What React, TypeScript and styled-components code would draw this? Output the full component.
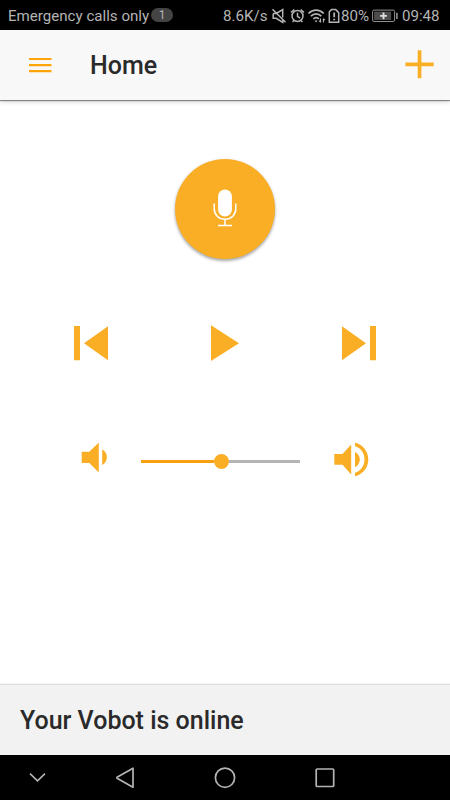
import React from 'react';
import styled, { createGlobalStyle } from 'styled-components';

const amber = '#f9ae26';
const statusGrey = '#b4b4b4';

const GlobalStyle = createGlobalStyle`
  * { box-sizing: border-box; }
  body { margin: 0; background: #fff; font-family: Roboto, sans-serif; }
  svg { display: block; flex: none; }
`;

const Screen = styled.div`
  width: 450px;
  height: 800px;
  display: flex;
  flex-direction: column;
  overflow: hidden;
  background: #fff;
`;

const StatusBar = styled.div`
  height: 30px;
  flex: none;
  display: flex;
  align-items: center;
  padding: 1px 8px 0 8px;
  background: #000;
  color: ${statusGrey};
  font-size: 15.1px;
  white-space: nowrap;
`;

const StatusText = styled.span<{ $width: number; $gap?: number }>`
  flex: none;
  width: ${(p) => p.$width}px;
  margin-left: ${(p) => p.$gap ?? 0}px;
  line-height: 20px;
`;

const CountBadge = styled.span`
  flex: none;
  width: 22px;
  height: 14px;
  margin: 0 50px 1px 2px;
  border-radius: 7px;
  background: #444;
  font-size: 12px;
  line-height: 14px;
  text-align: center;
`;

const Header = styled.header`
  height: 70px;
  flex: none;
  display: flex;
  align-items: center;
  padding: 0 16px 1px 28px;
  background: #f8f8f8;
  box-shadow: 0 1px 1px rgba(0, 0, 0, 0.42), 0 2px 5px rgba(0, 0, 0, 0.16);
`;

const Title = styled.h1`
  flex: 1;
  margin: 3px 0 0 38px;
  font-size: 25px;
  line-height: 30px;
  font-weight: 500;
  color: #2a2a2a;
`;

const IconButton = styled.button`
  padding: 0;
  border: 0;
  background: none;
`;

const Main = styled.main`
  flex: 1;
  display: flex;
  flex-direction: column;
  align-items: center;
  padding-top: 59px;
`;

const MicButton = styled.button`
  width: 100px;
  height: 100px;
  padding: 0 0 2px;
  border: 0;
  border-radius: 50%;
  display: flex;
  align-items: center;
  justify-content: center;
  background: ${amber};
  box-shadow: 0 2px 3px rgba(0, 0, 0, 0.3), 0 1px 4px rgba(0, 0, 0, 0.08);
`;

const Transport = styled.div`
  width: 302px;
  height: 36px;
  margin-top: 66px;
  display: flex;
  align-items: center;
  justify-content: space-between;
`;

const VolumeRow = styled.div`
  width: 288px;
  height: 36px;
  margin-top: 81px;
  display: flex;
  align-items: flex-start;
`;

const Slider = styled.div`
  width: 159px;
  height: 15px;
  margin: 12px 34px 0;
  display: flex;
  align-items: center;
`;

const Track = styled.div<{ $color: string; $flex: number }>`
  flex: ${(p) => p.$flex};
  height: 2.5px;
  background: ${(p) => p.$color};
`;

const Thumb = styled.div`
  width: 15px;
  height: 15px;
  border-radius: 50%;
  background: ${amber};
`;

const Footer = styled.footer`
  height: 71px;
  flex: none;
  display: flex;
  align-items: center;
  padding: 0 20px;
  background: #f2f2f2;
  border-top: 1px solid #dedede;
  box-shadow: 0 -1px 1px rgba(0, 0, 0, 0.04);
  color: #2a2a2a;
  font-size: 25px;
  font-weight: 500;
`;

const NavBar = styled.nav`
  height: 45px;
  flex: none;
  display: flex;
  align-items: center;
  padding-left: 28px;
  background: #000;
`;

const NavSlot = styled.div<{ $gap: number }>`
  margin-right: ${(p) => p.$gap}px;
`;

const StatusIcons = () => (
  <svg width="70" height="16" viewBox="0 0 70 16" fill="none" stroke={statusGrey} strokeWidth="1.5">
    <path d="M3.2 5.5h3l6.500-4v8M3.200 5.500v4.800h3l6.500 4V12M2.500 1.300l13 13" />
    <circle cx="27.500" cy="8" r="5.500" />
    <path d="M27.500 4.800v3.600l2.600 1.700M21 4.300l3.400-2.800M34 4.300l-3.400-2.800M23.800 12.500l-1.200 1.500M31.200 12.500l1.200 1.500" />
    <path d="M38.500 5.500c4.200-4.400 11-4.400 15.200 0M40.900 8.200c3-3 7.400-3 10.400 0M43.300 10.800c1.700-1.500 3.900-1.500 5.600 0" strokeWidth="1.800" />
    <path d="M44.500 12.600h3l-1.500 1.800z" fill={statusGrey} stroke="none" />
    <path d="M50.500 10.500v4M53.400 10.500v4M49.200 12.700l1.300 1.500M54.700 12.200l-1.300-1.500" strokeWidth="1.100" />
    <path d="M61.500 1.600h4.200l3 3v9.700h-9.400V3.800z" />
    <path d="M64.200 4.600v4.600M64.200 10.700v1.600" strokeWidth="1.800" />
  </svg>
);

const BatteryIcon = () => (
  <svg width="27" height="14" viewBox="0 0 27 14">
    <rect x="0.600" y="1.100" width="22" height="11.400" rx="1.500" fill="none" stroke="#929292" />
    <rect x="2.100" y="2.600" width="17" height="8.400" fill="#4c4c4c" />
    <path d="M11.500 3.500v6.800M8.100 6.900h6.800" stroke="#ddd" strokeWidth="1.900" />
    <path d="M24.900 3.700v6.200" stroke="#929292" strokeWidth="1.600" />
  </svg>
);

const MenuIcon = () => (
  <svg width="24" height="16" viewBox="0 0 24 16" fill="#ffa50a">
    <path d="M1 .900h22.500v2.200H1zM1 7h22.500v2.200H1zM1 13.100h22.500v2.200H1z" />
  </svg>
);

const PlusIcon = () => (
  <svg width="29" height="29" viewBox="0 0 29 29" fill={amber}>
    <path d="M12.700.300h3.700v12.200h12.300v3.700H16.400v12.100h-3.700V16.200H.400v-3.700h12.300z" />
  </svg>
);

const MicIcon = () => (
  <svg width="24" height="38" viewBox="0 0 24 38">
    <rect x="5.100" y="0.600" width="13.800" height="27" rx="6.900" fill="#fff" />
    <path d="M1.200 14.400v5.100c0 6.200 4.400 10.800 10.800 10.800s10.800-4.600 10.800-10.800v-5.100M12 30.300V36.500M5 36.500h14" fill="none" stroke="#fff" strokeWidth="1.500" />
  </svg>
);

const SkipIcon = ({ next = false }: { next?: boolean }) => (
  <svg width="34" height="36" viewBox="0 0 34 36" fill={amber}>
    <path d={next ? 'M0 1.300l24 17L0 35.300zM28 1h6v34.300h-6z' : 'M34 1.300L10 18.300l24 17zM0 1h6v34.300H0z'} />
  </svg>
);

const PlayIcon = () => (
  <svg width="28" height="36" viewBox="0 0 28 36" fill={amber}>
    <path d="M0 .300l28 17.900L0 36z" />
  </svg>
);

const VolumeLowIcon = () => (
  <svg width="26" height="32" viewBox="0 0 26 32" fill={amber}>
    <path d="M.700 9.700h7.600L17.800.400v30l-9.500-9.500H.700zM21.200 7.500c2.700 1.100 4.700 4.100 4.700 7.700s-2 6.600-4.700 7.800z" />
  </svg>
);

const VolumeHighIcon = () => (
  <svg width="35" height="36" viewBox="0 0 35 36" fill={amber}>
    <path d="M.300 12.100h8.200L17.200 2.500v30l-8.700-9.700H.300zM21 9.900c2.700 1.100 4.800 4.100 4.800 7.500s-2.100 6.500-4.800 7.700zM21 .800c7.600 1.500 13.300 8.500 13.300 16.600S28.600 32.500 21 34.200v-3.500c5.500-1.500 9.500-7 9.500-13.300S26.500 5.700 21 4.300z" />
  </svg>
);

const ChevronIcon = () => (
  <svg width="18" height="12" viewBox="0 0 18 12" fill="none" stroke={statusGrey} strokeWidth="1.600">
    <path d="M2 1.700l7.500 7.100L17 1.700" />
  </svg>
);

const BackIcon = () => (
  <svg width="20" height="22" viewBox="0 0 20 22" fill="none" stroke={statusGrey} strokeWidth="1.700" strokeLinejoin="round">
    <path d="M18 1.200v19L2 11.200v-1z" />
  </svg>
);

const HomeIcon = () => (
  <svg width="22" height="22" viewBox="0 0 22 22" fill="none" stroke={statusGrey} strokeWidth="1.700">
    <circle cx="11" cy="10.700" r="9.600" />
  </svg>
);

const RecentIcon = () => (
  <svg width="20" height="20" viewBox="0 0 20 20" fill="none" stroke={statusGrey} strokeWidth="1.700">
    <rect x="1.200" y="1" width="17.500" height="17.500" rx="1" />
  </svg>
);

export default function App() {
  return (
    <Screen>
      <GlobalStyle />
      <StatusBar>
        <StatusText $width={141}>Emergency calls only</StatusText>
        <CountBadge>1</CountBadge>
        <StatusText $width={47}>8.6K/s</StatusText>
        <StatusIcons />
        <StatusText $width={31} $gap={1}>80%</StatusText>
        <BatteryIcon />
        <StatusText $width={38} $gap={3}>09:48</StatusText>
      </StatusBar>
      <Header>
        <IconButton aria-label="Menu"><MenuIcon /></IconButton>
        <Title>Home</Title>
        <IconButton aria-label="Add"><PlusIcon /></IconButton>
      </Header>
      <Main>
        <MicButton aria-label="Speak"><MicIcon /></MicButton>
        <Transport>
          <IconButton aria-label="Previous"><SkipIcon /></IconButton>
          <IconButton aria-label="Play"><PlayIcon /></IconButton>
          <IconButton aria-label="Next"><SkipIcon next /></IconButton>
        </Transport>
        <VolumeRow>
          <VolumeLowIcon />
          <Slider>
            <Track $color="#f9a010" $flex={72.6} />
            <Thumb />
            <Track $color="#b4b4b4" $flex={71.4} />
          </Slider>
          <VolumeHighIcon />
        </VolumeRow>
      </Main>
      <Footer>Your Vobot is online</Footer>
      <NavBar>
        <NavSlot $gap={69}><ChevronIcon /></NavSlot>
        <NavSlot $gap={79}><BackIcon /></NavSlot>
        <NavSlot $gap={79}><HomeIcon /></NavSlot>
        <RecentIcon />
      </NavBar>
    </Screen>
  );
}
